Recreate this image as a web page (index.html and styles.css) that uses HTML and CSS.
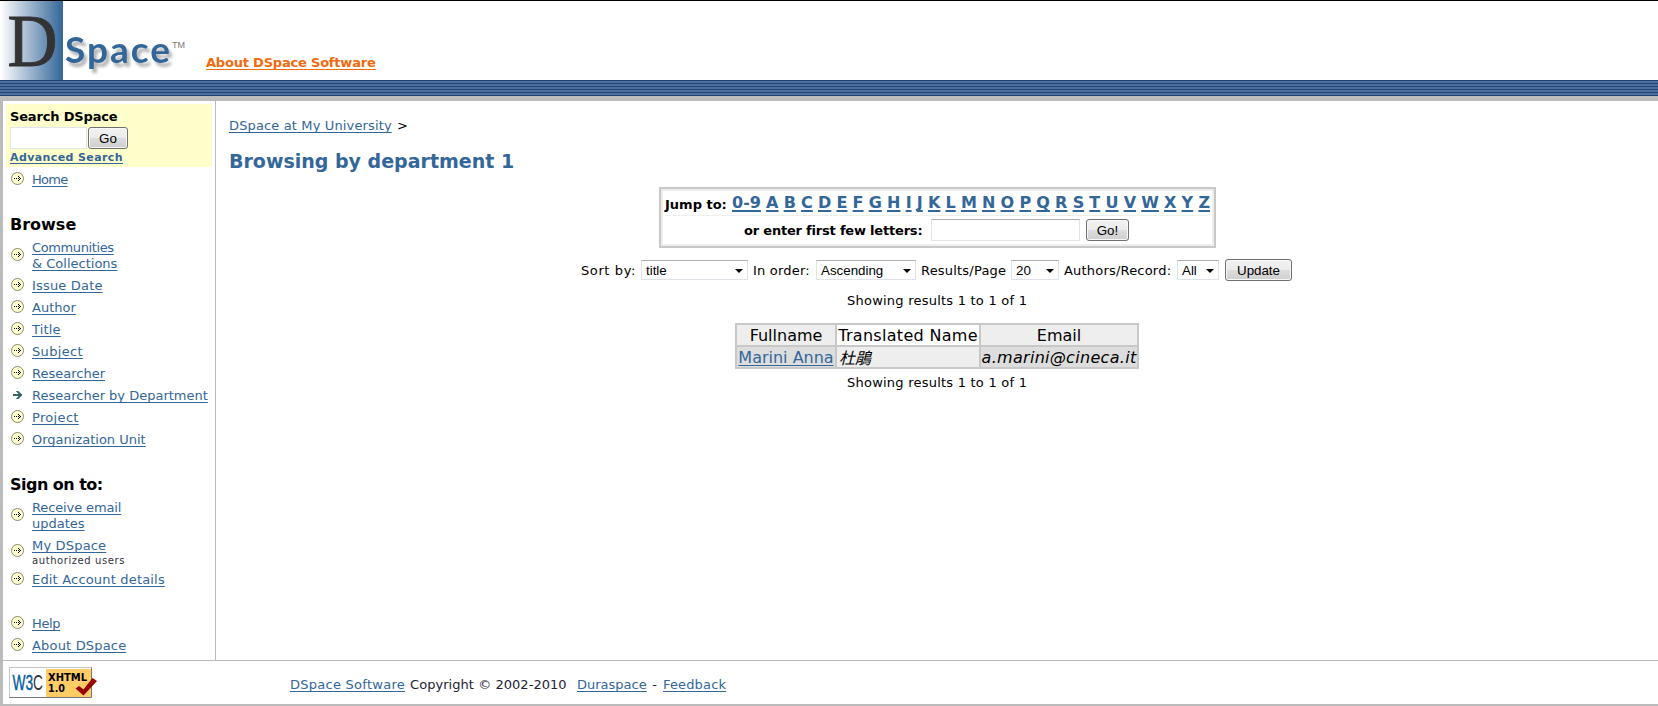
FILE: index.html
```html
<!DOCTYPE html>
<html lang="en">
<head>
<meta charset="utf-8">
<title>Browsing by department 1</title>
<link rel="stylesheet" href="styles.css">
</head>
<body>
<svg width="0" height="0" class="defs">
  <symbol id="dot" viewBox="0 0 14 14">
    <circle cx="7.500" cy="6.500" r="6" fill="#ffffcc" stroke="#8a8a70" stroke-width="1"/>
    <path d="M4 6h1v1H4zM6 6h1v1H6zM8 4h1v1H8zM9 5h1v1H9zM8 6h1v1H8zM10 6h1v1h-1zM9 7h1v1H9zM8 8h1v1H8z" fill="#000" shape-rendering="crispEdges"/>
  </symbol>
  <symbol id="cur" viewBox="0 0 14 14">
    <path d="M3 6h5.500L5.800 3h2.600L12.500 7l-4.100 4H5.800L8.500 8H3z" fill="#336666"/>
  </symbol>
</svg>
<header class="banner">
  <svg class="logo" width="190" height="79" viewBox="0 1 190 79">
    <defs><linearGradient id="g"><stop offset="0" stop-color="#fff"/><stop offset="1" stop-color="#336699"/></linearGradient>
    <filter id="s" x="-10%" y="-20%" width="130%" height="150%"><feDropShadow dx="3" dy="4" stdDeviation="1.500" flood-color="#000" flood-opacity=".3"/></filter></defs>
    <rect y="1" width="63" height="79" fill="url(#g)"/>
    <text x="7.500" y="66" class="logo-d" textLength="50" lengthAdjust="spacingAndGlyphs">D</text>
    <text x="65" y="63" class="logo-s" textLength="105" filter="url(#s)">Space</text>
    <text x="172" y="48" class="logo-tm" textLength="13">TM</text>
  </svg>
  <a class="about">About DSpace Software</a>
</header>
<div class="stripes"><i></i><i></i><i></i><i></i><i></i></div>
<div class="frame">
  <div class="columns">
    <nav class="side">
      <div class="search">
        <b class="t-search">Search DSpace</b>
        <div class="srow"><input class="box q"><button class="btn go">Go</button></div>
        <a class="adv">Advanced Search</a>
      </div>
      <div class="item"><svg class="ic"><use href="#dot"/></svg><a class="tightest">Home</a></div>
      <h2>Browse</h2>
      <div class="item"><svg class="ic mid"><use href="#dot"/></svg><div><a class="tight">Communities</a><br><a>&amp; Collections</a></div></div>
      <div class="item"><svg class="ic"><use href="#dot"/></svg><a class="wide">Issue Date</a></div>
      <div class="item"><svg class="ic"><use href="#dot"/></svg><a>Author</a></div>
      <div class="item"><svg class="ic"><use href="#dot"/></svg><a class="wide">Title</a></div>
      <div class="item"><svg class="ic"><use href="#dot"/></svg><a class="wider">Subject</a></div>
      <div class="item"><svg class="ic"><use href="#dot"/></svg><a>Researcher</a></div>
      <div class="item"><svg class="ic"><use href="#cur"/></svg><a>Researcher by Department</a></div>
      <div class="item"><svg class="ic"><use href="#dot"/></svg><a class="wider">Project</a></div>
      <div class="item"><svg class="ic"><use href="#dot"/></svg><a>Organization Unit</a></div>
      <h2 class="signon">Sign on to:</h2>
      <div class="item"><svg class="ic mid"><use href="#dot"/></svg><div><a class="snug">Receive email</a><br><a>updates</a></div></div>
      <div class="item"><svg class="ic mid"><use href="#dot"/></svg><div><a class="wide">My DSpace</a><small>authorized users</small></div></div>
      <div class="item"><svg class="ic"><use href="#dot"/></svg><a class="wide">Edit Account details</a></div>
      <div class="item help"><svg class="ic"><use href="#dot"/></svg><a class="tight">Help</a></div>
      <div class="item"><svg class="ic"><use href="#dot"/></svg><a class="wide">About DSpace</a></div>
    </nav>
    <main>
      <div class="crumb"><a>DSpace at My University</a> <span>&gt;</span></div>
      <h1>Browsing by department 1</h1>
      <section class="jump">
        <div class="jrow letters"><b>Jump to:</b><a>0-9</a><a>A</a><a>B</a><a>C</a><a>D</a><a>E</a><a>F</a><a>G</a><a>H</a><a>I</a><a>J</a><a>K</a><a>L</a><a>M</a><a>N</a><a>O</a><a>P</a><a>Q</a><a>R</a><a>S</a><a>T</a><a>U</a><a>V</a><a>W</a><a>X</a><a>Y</a><a>Z</a></div>
        <div class="jrow first"><b>or enter first few letters:</b><input class="box few"><button class="btn go2">Go!</button></div>
      </section>
      <section class="sort">
        <label class="by">Sort by:</label><div class="sel"><span>title</span><i></i></div>
        <label>In order:</label><div class="sel"><span>Ascending</span><i></i></div>
        <label>Results/Page</label><div class="sel"><span>20</span><i></i></div>
        <label>Authors/Record:</label><div class="sel"><span>All</span><i></i></div>
        <button class="btn">Update</button>
      </section>
      <p class="showing">Showing results 1 to 1 of 1</p>
      <div class="results">
        <span class="g1">Fullname</span><span class="g0 tn">Translated Name</span><span class="g1">Email</span>
        <span class="g2"><a>Marini Anna</a></span><span class="g1 cjk"><em>杜鵑</em></span><span class="g2 mail"><em>a.marini@cineca.it</em></span>
      </div>
      <p class="showing after">Showing results 1 to 1 of 1</p>
    </main>
  </div>
  <footer>
    <svg class="w3c" width="90" height="32" viewBox="9 667 90 32">
      <rect x="9.500" y="667.500" width="82" height="30" fill="#fff" stroke="#c4c4c4"/>
      <path d="M91.500 667.500v30H9.500" fill="none" stroke="#777"/>
      <rect x="46" y="669" width="45" height="28" fill="#fc6"/>
      <text x="12.500" y="690" class="w3" textLength="30.500" lengthAdjust="spacingAndGlyphs">W3<tspan class="wc">C</tspan></text>
      <text x="48" y="680.500" class="xh" textLength="39" lengthAdjust="spacingAndGlyphs">XHTML</text>
      <text x="48" y="691.500" class="xh" textLength="17" lengthAdjust="spacingAndGlyphs">1.0</text>
      <path d="M75.500 688.500l3.500-2.500 4.500 3.500 9-11.500 4.500 3-13.500 14.500z" fill="#900"/>
    </svg>
    <div class="copy"><a class="f1">DSpace Software</a><span class="f2">Copyright © 2002-2010</span><a class="f3">Duraspace</a><span class="f4">-</span><a class="f5">Feedback</a></div>
  </footer>
</div>
</body>
</html>
```

FILE: styles.css
```css
* { box-sizing: border-box; }
body { margin: 0; height: 706px; overflow: hidden; background: #fff; color: #000; font: 13px/16px Verdana, "DejaVu Sans", sans-serif; border-top: 1px solid #000; }
a { color: #336699; text-decoration: underline; text-underline-offset: 2px; text-decoration-thickness: 1px; text-decoration-skip-ink: none; }
.defs { display: block; }
.banner { height: 79px; display: flex; }
.logo { display: block; margin-right: 16px; }
.logo-d { font: 75px "Liberation Serif", serif; fill: #333; stroke: #333; stroke-width: 1; }
.logo-s { font: bold 37px Lato, sans-serif; fill: #336699; }
.logo-tm { font: 9px "Liberation Sans", sans-serif; fill: #777; }
.about { color: #f26a0c; font-weight: bold; margin-top: 54px; height: 16px; letter-spacing: -0.2px; }
.stripes { height: 16px; background: #23426f; display: flex; flex-direction: column; justify-content: space-between; padding: 1px 0; }
.stripes i { height: 2px; background: #4a70a3; }
.frame { border: solid #bbb; border-width: 5px 0 2px 3px; height: 610px; }
.columns { display: flex; height: 559px; }
.side { width: 213px; border-right: 1px solid #bbb; padding: 3px 3px 0; }
.search { background: #ffffcc; height: 63px; margin-bottom: 1px; padding: 5px 4px 0; }
.t-search { display: block; height: 18px; letter-spacing: -0.16px; }
.srow { display: flex; gap: 1px; }
.box { border: 1px solid #e0e3e8; border-top-color: #abadb3; height: 22px; background: #fff; padding: 0; display: block; }
.q { width: 77px; border-top-color: #e0e3e8; }
.btn { height: 22px; padding: 0; border: 1px solid #707070; border-radius: 3px; background: linear-gradient(#f2f2f2, #ebebeb 50%, #ddd 50%, #cfcfcf); box-shadow: inset 0 0 0 1px #f8f8f8; color: #000; font: 13.333px "Liberation Sans", Arial, sans-serif; }
.go { width: 40px; }
.adv { display: block; font-weight: bold; font-size: 11px; line-height: 18px; letter-spacing: 0.39px; }
.item { display: flex; padding: 4px 0 2px 4px; gap: 8px; white-space: nowrap; }
.ic { width: 14px; height: 14px; flex: none; }
.ic.mid { align-self: center; margin-top: -2px; }
.tightest { letter-spacing: -0.7px; }
.tight { letter-spacing: -0.38px; }
.snug { letter-spacing: -0.12px; }
.wide { letter-spacing: 0.18px; }
.wider { letter-spacing: 0.33px; }
small { display: block; font-size: 10px; line-height: 14px; height: 12px; color: #334; letter-spacing: 0.58px; }
.help { margin-top: 22px; }
h2 { margin: 22px 0 0 4px; font-size: 16px; line-height: 26px; height: 24px; }
.signon { letter-spacing: -0.52px; }
main { flex: 1; padding: 17px 0 0 13px; }
.crumb { height: 16px; letter-spacing: 0.14px; }
.crumb span { margin-left: 1px; }
h1 { margin: 15px 0 0; font-size: 19px; line-height: 24px; height: 24px; color: #336699; }
.jump { margin: 14px 0 0 430px; width: 557px; height: 61px; border: 2px solid #c8c8c8; box-shadow: inset 0 0 0 2px #eee; padding: 3px 4px 2px; }
.jrow { display: flex; }
.letters { height: 24px; align-items: baseline; justify-content: space-between; border-bottom: 1px solid #eee; white-space: nowrap; }
.letters b { position: relative; top: 1px; }
.letters a { font-size: 16px; line-height: 22px; font-weight: bold; text-decoration-thickness: 2px; }
.first { padding: 3px 0 0 79px; align-items: center; }
.first b { width: 187px; white-space: nowrap; letter-spacing: -0.2px; padding-top: 1px; }
.few { width: 149px; }
.go2 { width: 43px; margin-left: 6px; }
.sort { display: grid; grid-template-columns: 60px 107px 68px 100px 95px 48px 118px 42px 67px; height: 22px; margin: 11px 0 0 352px; align-items: center; white-space: nowrap; }
.sort label { letter-spacing: 0.2px; padding-top: 2px; }
.sort .by { letter-spacing: 0.6px; }
.sort label + .sel ~ label { padding-left: 5px; }
.sort .btn { margin-left: 6px; width: 67px; }
.sel { height: 20px; border: 1px solid #dfe2e8; border-top-color: #abadb3; display: flex; align-items: center; justify-content: space-between; padding: 1px 4px 0; font: 13.333px "Liberation Sans", Arial, sans-serif; }
.sel i { border: 4px solid transparent; border-top-color: #000; border-bottom: 0; }
.showing { margin: 12px 0 0 618px; height: 16px; white-space: nowrap; letter-spacing: 0.23px; }
.results { display: grid; grid-template-columns: 98px 142px 156px; grid-auto-rows: 20px; gap: 2px; padding: 2px; width: 404px; margin: 14px 0 0 506px; background: #c8c8c8; font-size: 16px; line-height: 21px; text-align: center; white-space: nowrap; }
.tn, .mail { letter-spacing: 0.3px; }
.g0 { background: #fff; } .g1 { background: #eee; } .g2 { background: #ddd; }
.cjk { text-align: left; padding-left: 2px; font-family: "Noto Sans CJK TC", sans-serif; }
.after { margin-top: 6px; }
footer { height: 44px; border-top: 1px solid #bbb; display: flex; padding: 6px 0 0 6px; }
.copy { display: flex; margin: 10px 0 0 191px; color: #223; white-space: nowrap; }
.f1 { width: 115px; margin-right: 5px; letter-spacing: 0.26px; } .f2 { width: 167px; letter-spacing: 0.05px; } .f3 { width: 69px; } .f4 { width: 17px; text-align: center; } .f5 { width: 63px; letter-spacing: 0.15px; }
.w3 { font: 22px "Liberation Sans", sans-serif; fill: #005a9c; stroke: #005a9c; stroke-width: 0.4; }
.wc { fill: #333; stroke: none; }
.xh { font: bold 10px "DejaVu Sans", sans-serif; }
```
